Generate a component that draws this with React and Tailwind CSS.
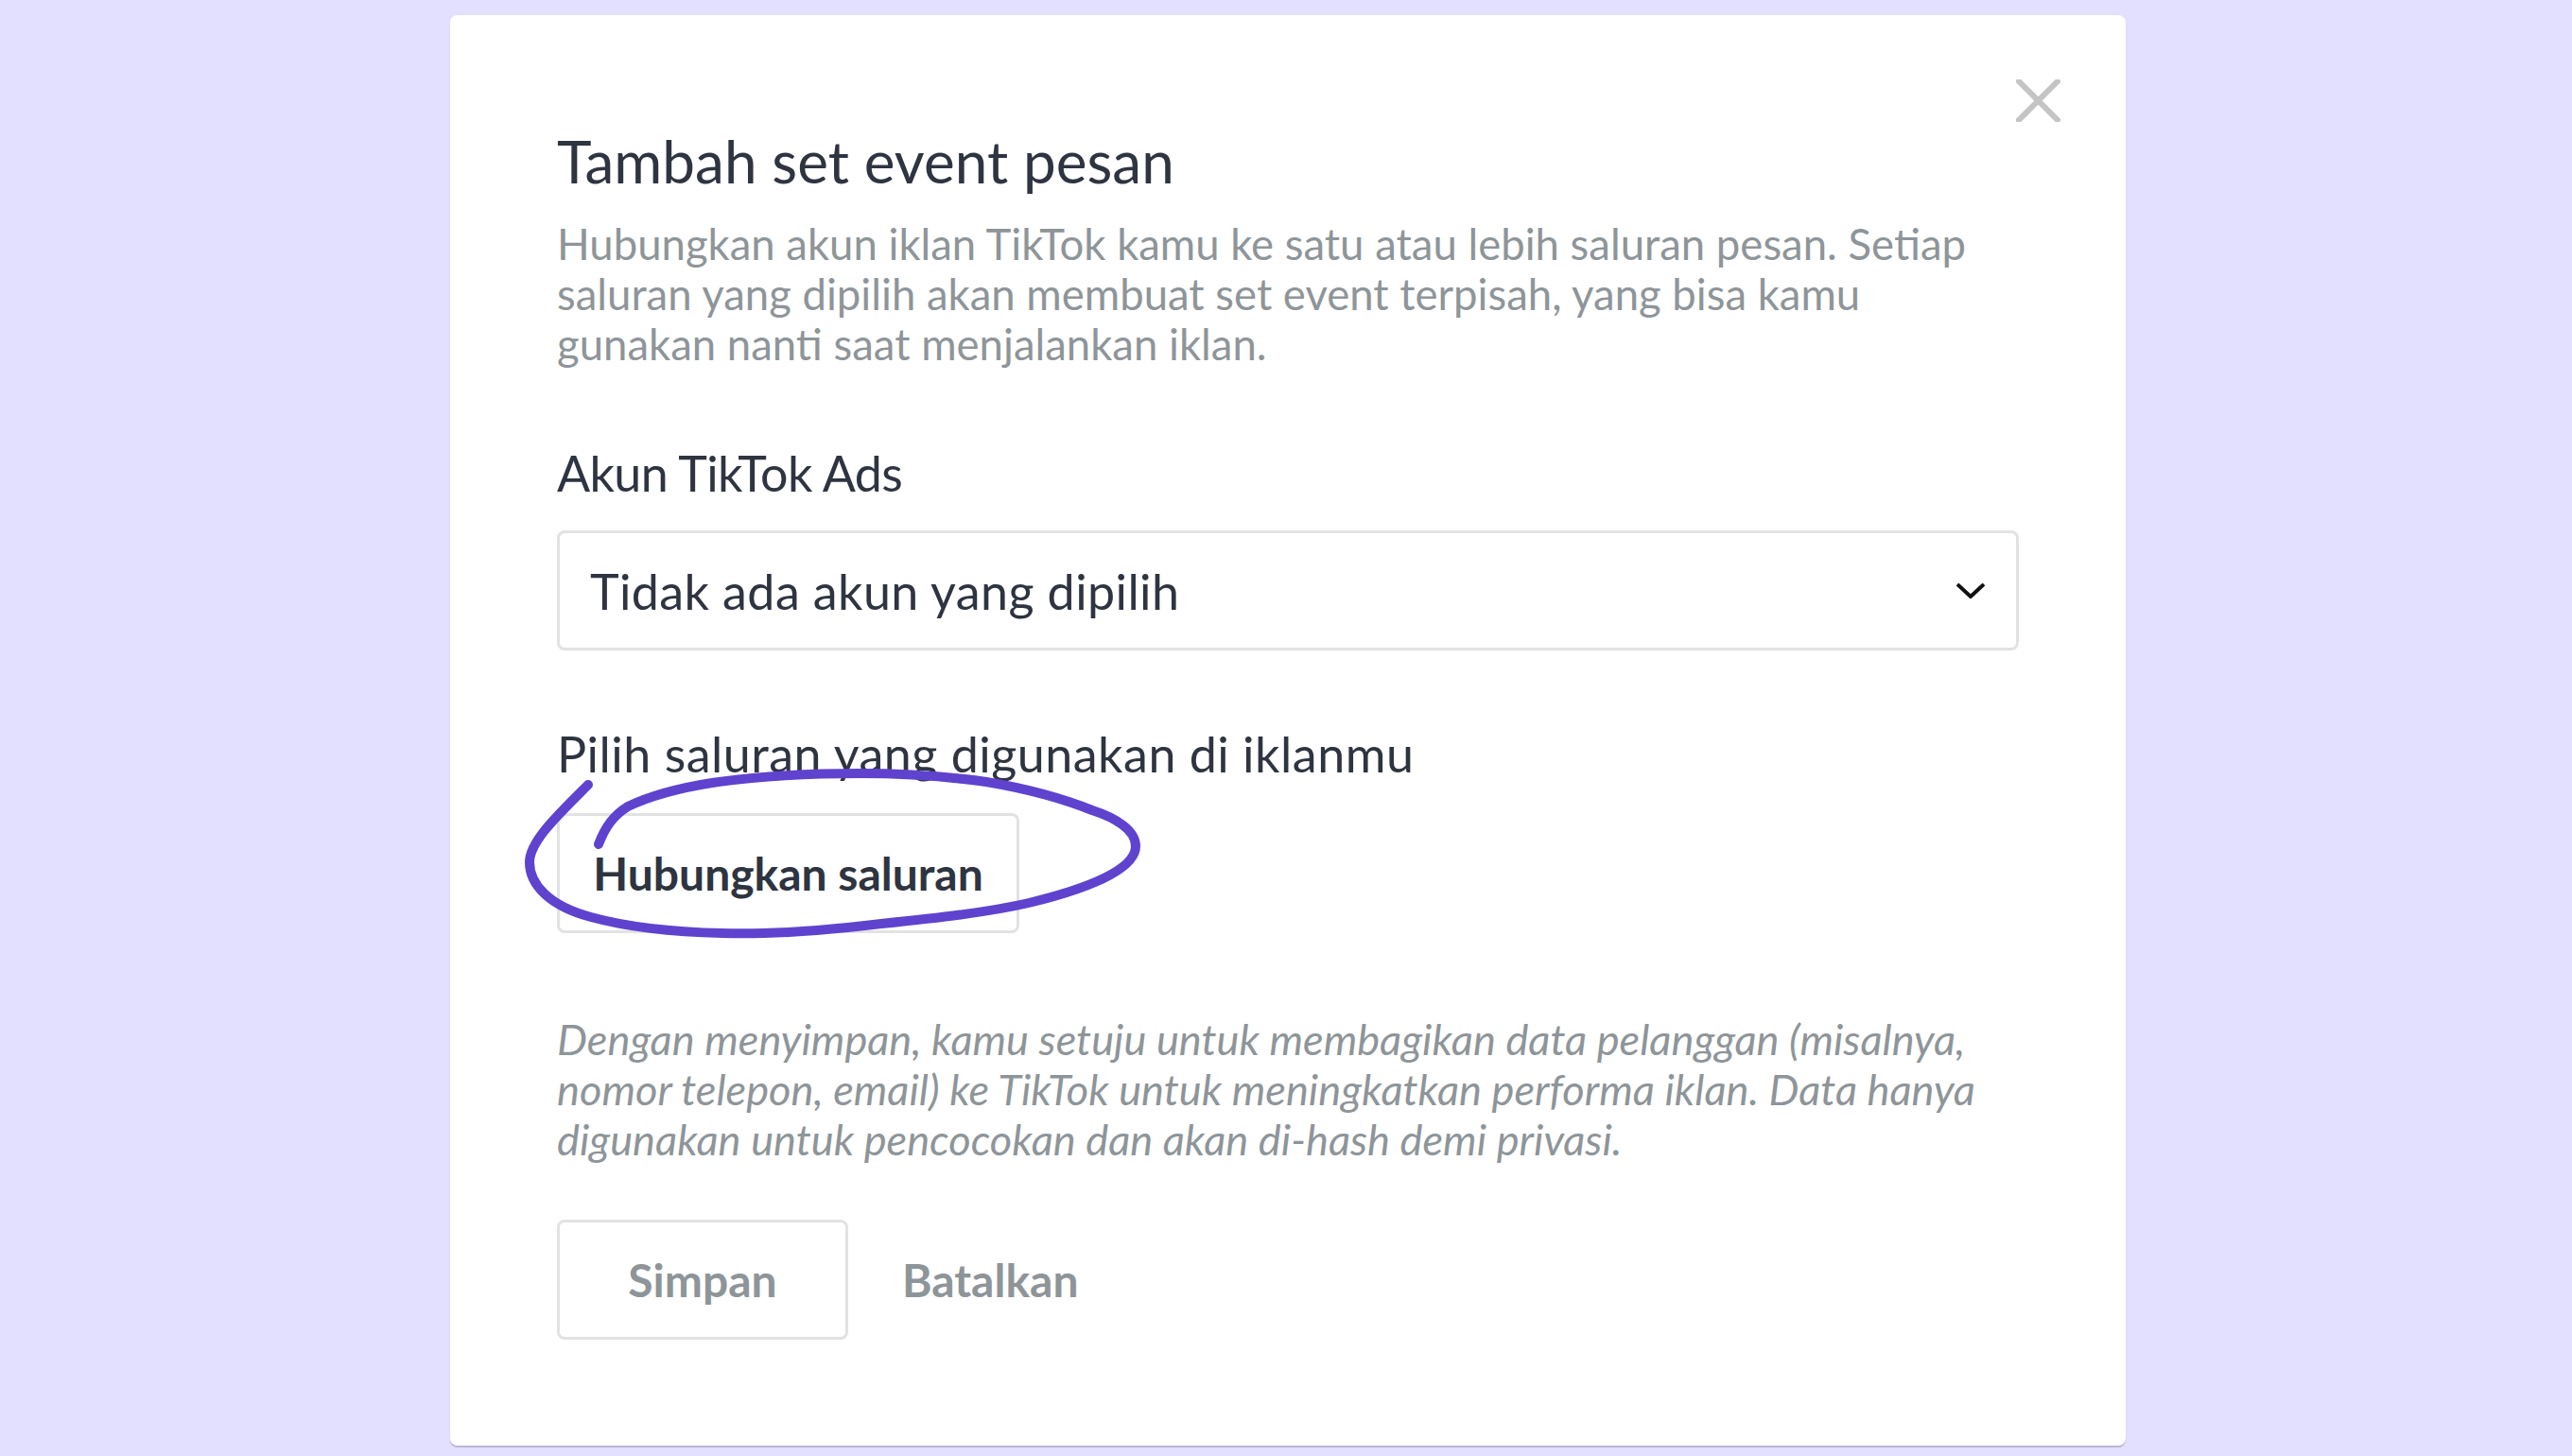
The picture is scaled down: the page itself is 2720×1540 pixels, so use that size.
import React from 'react';

const Scribble = () => (
  <svg className="absolute left-0 top-0 pointer-events-none" width="2720" height="1540" viewBox="0 0 2720 1540" fill="none">
    <path
      d="M622 830C590 862 560 890 560 912C560 935 580 958 625 970C680 985 750 988 807 987C850 986 890 982 932 977C990 971 1045 965 1088 955C1150 940 1201 920 1201 895C1201 878 1180 865 1155 857C1120 843 1085 834 1043 827C1000 821 955 818 909 818C855 818 800 821 753 828C715 834 685 843 664 853C648 863 640 875 633 893"
      stroke="#5f43cf"
      strokeWidth="10"
      strokeLinecap="round"
      strokeLinejoin="round"
    />
  </svg>
);

const App = () => {
  return (
    <div className="relative w-[2720px] h-[1540px] overflow-hidden bg-[#e3dffe] pl-[476px] pt-[16px] font-['Lato',sans-serif] text-[#2e3440]">
      <div className="relative w-[1772px] h-[1513px] rounded-[8px] bg-white pl-[113px] pt-[121px] shadow-[0_2px_1px_#b9b4d6]">
        <svg className="absolute left-[1656px] top-[68px]" width="47" height="45" viewBox="0 0 47 45" fill="none">
          <path d="M1 0L46 45M46 0L1 45" stroke="#c4c4c4" strokeWidth="6" />
        </svg>

        <h1 className="text-[62px] leading-[66px] font-normal">Tambah set event pesan</h1>
        <p className="mt-[28px] text-[45.5px] leading-[53px] text-[#8e9599]">
          <span className="block">Hubungkan akun iklan TikTok kamu ke satu atau lebih saluran pesan. Setiap</span>
          <span className="block">saluran yang dipilih akan membuat set event terpisah, yang bisa kamu</span>
          <span className="block">gunakan nanti saat menjalankan iklan.</span>
        </p>

        <div className="mt-[80px] text-[52px] leading-[60px] tracking-[-0.6px]">Akun TikTok Ads</div>
        <div className="mt-[31px] w-[1546px] h-[127px] rounded-[8px] border-[3px] border-[#e2e2e2] flex items-center justify-between pl-[32px] pr-[33px]">
          <span className="text-[52px] tracking-[0.4px]">Tidak ada akun yang dipilih</span>
          <svg width="30" height="16" viewBox="0 0 30 16" fill="none">
            <path d="M1 1L15 14L29 1" stroke="#111" strokeWidth="4" />
          </svg>
        </div>

        <div className="mt-[79px] text-[52px] leading-[60px] tracking-[0.5px]">Pilih saluran yang digunakan di iklanmu</div>
        <button className="mt-[33px] block w-[489px] h-[127px] rounded-[8px] border-[3px] border-[#e2e2e2] text-[48px] font-bold">
          Hubungkan saluran
        </button>

        <p className="mt-[85px] text-[45.2px] leading-[53px] italic text-[#8e9599]">
          <span className="block">Dengan menyimpan, kamu setuju untuk membagikan data pelanggan (misalnya,</span>
          <span className="block">nomor telepon, email) ke TikTok untuk meningkatkan performa iklan. Data hanya</span>
          <span className="block">digunakan untuk pencocokan dan akan di-hash demi privasi.</span>
        </p>

        <div className="mt-[59px] flex items-center gap-[57px] text-[48px] font-bold text-[#8e9599]">
          <button className="w-[308px] h-[127px] rounded-[8px] border-[3px] border-[#e2e2e2]">Simpan</button>
          <button>Batalkan</button>
        </div>
      </div>
      <Scribble />
    </div>
  );
};

export default App;
